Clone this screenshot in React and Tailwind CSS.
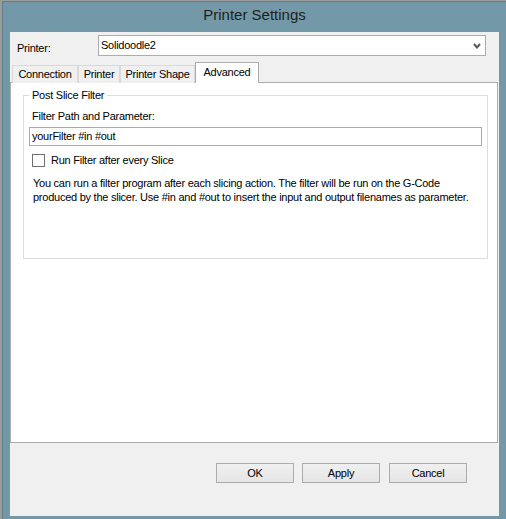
import React from 'react';

const tabs = [
  { label: 'Connection', w: 'w-[66px]' },
  { label: 'Printer', w: 'w-[42px]' },
  { label: 'Printer Shape', w: 'w-[75px]' },
];

function Tab({ label, w }) {
  return (
    <div className={`${w} h-[18px] flex items-center justify-center border border-b-0 border-[#d9d9d9] bg-[#f0f0f0]`}>
      {label}
    </div>
  );
}

function Button({ children, className = '' }) {
  return (
    <button className={`w-[78px] h-[20px] flex items-center justify-center border border-[#acacac] bg-gradient-to-b from-[#f0f0f0] to-[#e5e5e5] text-black ${className}`}>
      {children}
    </button>
  );
}

export default function App() {
  return (
    <div className="w-[506px] h-[519px] overflow-hidden bg-[#9c9c9c] pt-[1px] pl-[2px] flex font-['Liberation_Sans',Arial,sans-serif] text-[11px] leading-[13px] tracking-[-0.25px] text-black">
      {/* window frame */}
      <div className="w-[504px] shrink-0 flex flex-col border-l border-t border-[#5e7f8c] bg-[#7399a8] pl-[7px] pr-[7px]">
        {/* title bar */}
        <div className="h-[30px] pt-[3px] text-center text-[15px] leading-[20px] tracking-normal text-[#1e1e1e]">
          Printer Settings
        </div>

        {/* client area */}
        <div className="w-[489px] h-[484px] shrink-0 bg-[#f0f0f0] flex flex-col">
          {/* printer row */}
          <div className="flex items-start mt-[3px] pl-[7px] pr-[13px]">
            <div className="w-[81px] mt-[7px]">Printer:</div>
            <div className="flex-1 h-[21px] border border-[#acacac] bg-white flex items-start pl-[2px] pt-[3px]">
              <span>Solidoodle2</span>
              <svg className="ml-auto mr-[4px] self-center -mt-[3px]" width="8" height="6" viewBox="0 0 8 6">
                <path d="M1 1 L4 4.5 L7 1" fill="none" stroke="#5a5a5a" strokeWidth="2" />
              </svg>
            </div>
          </div>

          {/* tab strip */}
          <div className="flex items-end mt-[6px] pl-[2px] relative z-10 -mb-px">
            {tabs.map((t) => (
              <Tab key={t.label} {...t} />
            ))}
            <div className="w-[64px] h-[21px] flex items-start justify-center pt-[3px] border border-b-0 border-[#acacac] bg-white">
              Advanced
            </div>
          </div>

          {/* tab panel */}
          <div className="w-[488px] h-[361px] border border-[#acacac] bg-white">
            <fieldset className="ml-[12px] mt-[5px] w-[464px] h-[171px] border border-[#dcdcdc] px-[5px]">
              <legend className="px-[3px] leading-[14px]">Post Slice Filter</legend>
              <div className="ml-[3px] mt-[8px]">Filter Path and Parameter:</div>
              <div className="mt-[4px] w-[453px] h-[19px] border border-[#a9a9a9] bg-white flex items-center pl-[2px]">
                yourFilter #in #out
              </div>
              <label className="mt-[8px] ml-[3px] flex items-center">
                <span className="w-[13px] h-[13px] border border-[#707070] bg-white" />
                <span className="ml-[6px]">Run Filter after every Slice</span>
              </label>
              <p className="mt-[10px] ml-[4px] leading-[13.5px] whitespace-nowrap">
                You can run a filter program after each slicing action. The filter will be run on the G-Code
                <br />
                produced by the slicer. Use #in and #out to insert the input and output filenames as parameter.
              </p>
            </fieldset>
          </div>

          {/* buttons */}
          <div className="flex mt-[20px] pl-[206px]">
            <Button className="mr-[8px]">OK</Button>
            <Button className="mr-[9px]">Apply</Button>
            <Button>Cancel</Button>
          </div>
        </div>
      </div>
    </div>
  );
}
